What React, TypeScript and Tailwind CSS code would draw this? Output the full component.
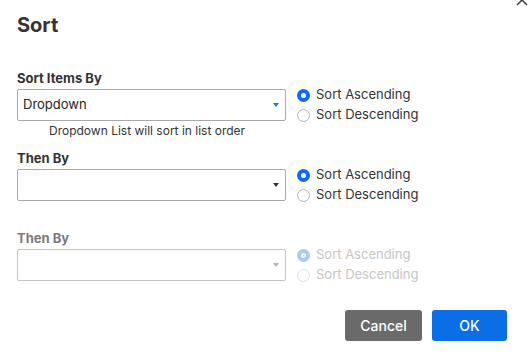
import React from "react";

type SortRowProps = {
  label: string;
  value?: string;
  helper?: string;
  disabled?: boolean;
  accent?: boolean;
};

function Caret({ className }: { className: string }) {
  return (
    <svg width="6" height="4" viewBox="0 0 6 4" className={className}>
      <path d="M0 0 L6 0 L3 4 Z" fill="currentColor" />
    </svg>
  );
}

function Radio({ checked, disabled, label }: { checked: boolean; disabled?: boolean; label: string }) {
  return (
    <div className="flex h-[20px] items-center gap-[6px]">
      {checked ? (
        <span
          className={`flex h-[13px] w-[13px] items-center justify-center rounded-full ${
            disabled ? "bg-[#a9cbf6]" : "bg-[#0a6fe6]"
          }`}
        >
          <span className="h-[5px] w-[5px] rounded-full bg-white" />
        </span>
      ) : (
        <span
          className={`h-[13px] w-[13px] rounded-full border bg-white ${
            disabled ? "border-[#e2e2e2]" : "border-[#b3b3b3]"
          }`}
        />
      )}
      <span className={`text-[13px] ${disabled ? "text-[#c6c6c6]" : "text-[#333]"}`}>{label}</span>
    </div>
  );
}

function SortRow({ label, value, helper, disabled = false, accent = false }: SortRowProps) {
  return (
    <div className="h-[80px]">
      <div className={`text-[13px] font-bold leading-[16px] ${disabled ? "text-[#7a7a7a]" : "text-[#333]"}`}>
        {label}
      </div>
      <div className="mt-[-1px] flex items-start gap-[11px]">
        <div className="mt-[4px]">
          <div
            className={`flex h-[32px] w-[269px] items-center justify-between rounded-[2px] border bg-white pl-[5px] pr-[6px] ${
              disabled ? "border-[#c4c4c4]" : "border-[#a9a9a9]"
            }`}
          >
            <span className="text-[13px] text-[#222]">{value}</span>
            <Caret
              className={accent ? "text-[#1a73e8]" : disabled ? "text-[#b5b5b5]" : "text-[#333]"}
            />
          </div>
          {helper && (
            <div className="ml-[32px] mt-[2px] text-[12px] leading-[16px] text-[#333]">{helper}</div>
          )}
        </div>
        <div className="flex flex-col">
          <Radio checked disabled={disabled} label="Sort Ascending" />
          <Radio checked={false} disabled={disabled} label="Sort Descending" />
        </div>
      </div>
    </div>
  );
}

export default function App() {
  return (
    <div className="relative h-[359px] w-[531px] overflow-hidden bg-white font-['Inter',sans-serif] text-[#333]">
      {/* close button, mostly scrolled off the top */}
      <svg width="12" height="12" viewBox="0 0 12 12" className="absolute left-[516px] top-[-6px]">
        <path d="M1 1 L11 11 M11 1 L1 11" stroke="#444" strokeWidth="1.6" />
      </svg>

      <div className="px-[17px] pt-[13px]">
        <h1 className="text-[20px] font-bold leading-[24px] text-[#333]">Sort</h1>

        <div className="mt-[33px]">
          <SortRow label="Sort Items By" value="Dropdown" helper="Dropdown List will sort in list order" accent />
          <SortRow label="Then By" />
          <SortRow label="Then By" disabled />
        </div>

        <div className="flex justify-end gap-[10px] pr-[7px]">
          <button
            type="button"
            className="h-[31px] w-[77px] rounded-[3px] bg-[#6a6a6a] text-[14px] font-medium text-white"
          >
            Cancel
          </button>
          <button
            type="button"
            className="h-[31px] w-[75px] rounded-[3px] bg-[#0a6fe6] text-[14px] font-medium text-white"
          >
            OK
          </button>
        </div>
      </div>
    </div>
  );
}
